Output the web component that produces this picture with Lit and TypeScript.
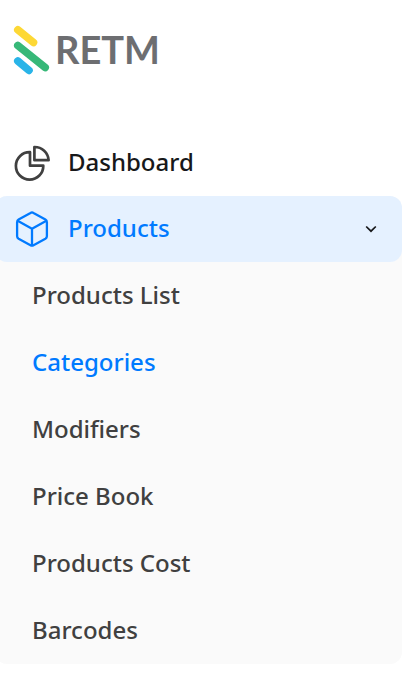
import { LitElement, html, svg, css, nothing } from "lit";
import { customElement, state } from "lit/decorators.js";
import { classMap } from "lit/directives/class-map.js";

const pieIcon = svg`
  <path d="M16 7.2V20.7H29.3A13.7 13.7 0 1 1 16 7.2Z" />
  <path d="M20.4 2V15.2H34.6A14 14 0 0 0 20.4 2Z" />`;

const boxIcon = svg`
  <path d="M16.5 1.9 4.6 8.6Q3.1 9.5 3.1 11.2V25.2Q3.1 26.8 4.6 27.7L16.5 34.2Q18 35 19.5 34.2L31.4 27.7Q32.9 26.8 32.9 25.2V11.2Q32.9 9.5 31.4 8.6L19.5 1.9Q18 1 16.5 1.9Z" />
  <path d="M3.6 9.8 18 17.8 32.4 9.8M18 17.8V34.4" />`;

@customElement("app-root")
export class AppRoot extends LitElement {
  static styles = css`
    :host {
      display: block;
      min-height: 100vh;
      background: #ffffff;
      font-family: "Noto Sans", "Open Sans", sans-serif;
      font-size: 24px;
      font-weight: 500;
      line-height: 32px;
      color: #17181a;
    }
    .brand {
      display: flex;
      align-items: center;
      gap: 4px;
      height: 100px;
      padding-left: 13px;
      margin-bottom: 30px;
      color: #6d6e71;
      text-decoration: none;
    }
    .mark {
      width: 38px;
      height: 50px;
      fill: none;
      stroke-width: 7.6;
      stroke-linecap: round;
    }
    .wordmark {
      padding-bottom: 2px;
      font-family: Lato, "Noto Sans", sans-serif;
      font-size: 38px;
      font-weight: 700;
      line-height: 48px;
    }
    .row {
      box-sizing: border-box;
      display: flex;
      align-items: center;
      gap: 18px;
      width: 100%;
      height: 66px;
      padding: 0 25px 0 19px;
      border: 0;
      border-radius: 12px;
      background: none;
      font: inherit;
      color: inherit;
      text-align: left;
      text-decoration: none;
      cursor: pointer;
    }
    .nav {
      margin: 0 17px 0 -5px;
    }
    .row.open {
      background: #e5f1ff;
      color: #007aff;
    }
    .icon {
      flex: none;
      width: 36px;
      height: 36px;
      fill: none;
      stroke: #404040;
      stroke-width: 2.7;
      stroke-linejoin: round;
    }
    .open .icon {
      stroke: #007aff;
      stroke-width: 2.3;
    }
    .label {
      flex: 1;
      padding-bottom: 2px;
    }
    .chevron {
      width: 12px;
      height: 8px;
      fill: none;
      stroke: #17181a;
      stroke-width: 1.7;
    }
    .group {
      border-radius: 12px;
      background: #fafafa;
    }
    .list {
      margin: 0;
      padding: 0;
      list-style: none;
    }
    .item {
      box-sizing: border-box;
      display: flex;
      align-items: center;
      height: 67px;
      padding: 0 0 2px 37px;
      color: #404040;
      text-decoration: none;
    }
    .item.active {
      color: #007aff;
    }
  `;

  @state() private open = true;
  @state() private current = "Categories";

  private items = [
    "Products List",
    "Categories",
    "Modifiers",
    "Price Book",
    "Products Cost",
    "Barcodes",
  ];

  render() {
    return html`
      <a class="brand" href="#">
        <svg class="mark" viewBox="0 0 38 50" aria-hidden="true">
          <path stroke="#fdd835" d="M4.8 4.8 20.5 17.5" />
          <path stroke="#37b878" d="M4.8 20.5 32.2 42.5" />
          <path stroke="#29b4e8" d="M4.8 36 16 45.4" />
        </svg>
        <span class="wordmark">RETM</span>
      </a>
      <nav class="nav">
        <a class="row" href="#dashboard">
          <svg class="icon" viewBox="0 0 36 36" aria-hidden="true">${pieIcon}</svg>
          <span class="label">Dashboard</span>
        </a>
        <div class="group">
          <button
            class="row open"
            type="button"
            aria-expanded=${this.open}
            @click=${() => (this.open = !this.open)}
          >
            <svg class="icon" viewBox="0 0 36 36" aria-hidden="true">${boxIcon}</svg>
            <span class="label">Products</span>
            <svg class="chevron" viewBox="0 0 12 8" aria-hidden="true">
              <path d="M1.2 1.5 6 6.2 10.8 1.5" />
            </svg>
          </button>
          ${this.open
            ? html`<ul class="list">
                ${this.items.map(
                  (name) => html`<li>
                    <a
                      class=${classMap({ item: true, active: name === this.current })}
                      href="#${name.toLowerCase().replace(" ", "-")}"
                      @click=${() => (this.current = name)}
                      >${name}</a
                    >
                  </li>`
                )}
              </ul>`
            : nothing}
        </div>
      </nav>
    `;
  }
}
